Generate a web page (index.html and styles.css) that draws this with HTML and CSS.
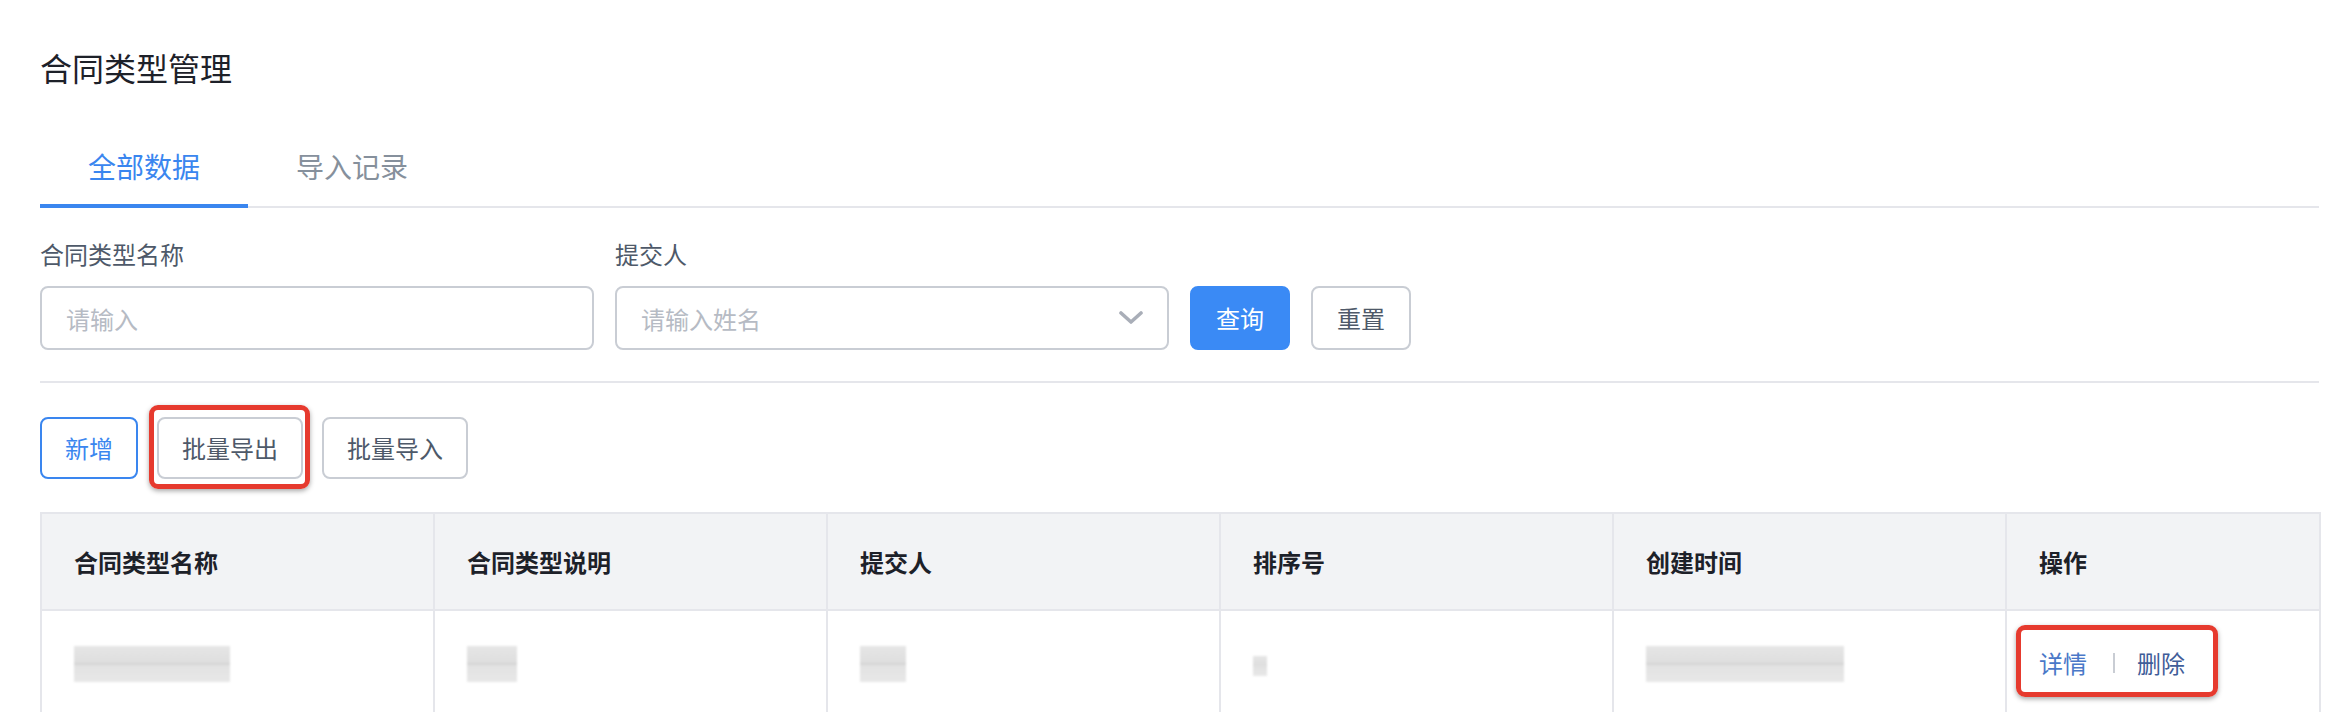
FILE: index.html
```html
<!DOCTYPE html>
<html lang="zh-CN">
<head>
<meta charset="utf-8">
<title>合同类型管理</title>
<link rel="stylesheet" href="styles.css">
</head>
<body>
<div class="page">
  <h1 class="title">合同类型管理</h1>

  <div class="tabs">
    <div class="tab active">全部数据</div>
    <div class="tab">导入记录</div>
  </div>

  <div class="filters">
    <div class="field">
      <div class="label">合同类型名称</div>
      <div class="input"><span class="placeholder">请输入</span></div>
    </div>
    <div class="field">
      <div class="label">提交人</div>
      <div class="input select">
        <span class="placeholder">请输入姓名</span>
        <svg class="chevron" width="24" height="14" viewBox="0 0 24 14"><path d="M2 2 L12 11 L22 2" fill="none" stroke="#a9aeb8" stroke-width="3.6" stroke-linecap="round" stroke-linejoin="round"/></svg>
      </div>
    </div>
    <div class="filter-actions">
      <button class="btn primary">查询</button>
      <button class="btn">重置</button>
    </div>
  </div>

  <div class="divider"></div>

  <div class="toolbar">
    <button class="btn outline-blue">新增</button>
    <button class="btn marked">批量导出<span class="mark mark-btn"></span></button>
    <button class="btn">批量导入</button>
  </div>

  <table class="grid">
    <colgroup>
      <col class="c-std"><col class="c-std"><col class="c-std"><col class="c-std"><col class="c-std"><col class="c-op">
    </colgroup>
    <thead>
      <tr>
        <th>合同类型名称</th>
        <th>合同类型说明</th>
        <th>提交人</th>
        <th>排序号</th>
        <th>创建时间</th>
        <th>操作</th>
      </tr>
    </thead>
    <tbody>
      <tr>
        <td><span class="blur" style="width:156px"></span></td>
        <td><span class="blur" style="width:50px"></span></td>
        <td><span class="blur" style="width:46px"></span></td>
        <td><span class="blur small" style="width:14px"></span></td>
        <td><span class="blur" style="width:198px"></span></td>
        <td>
          <span class="ops">
            <a class="link detail">详情</a><span class="sep"></span><a class="link del">删除</a>
            <span class="mark mark-ops"></span>
          </span>
        </td>
      </tr>
    </tbody>
  </table>
</div>
</body>
</html>
```

FILE: styles.css
```css
* { box-sizing: border-box; }
html, body { margin: 0; padding: 0; background: #fff; }
body {
  font-family: "PingFang SC", "Noto Sans CJK SC", "Noto Sans", sans-serif;
  color: #1d2129;
}
.page {
  padding: 45px 27px 0 40px;
}
.title {
  margin: 0;
  font-size: 32px;
  line-height: 44px;
  font-weight: 400;
  color: #1d2129;
}
.tabs {
  display: flex;
  margin-top: 57px;
  box-shadow: inset 0 -2px 0 #e5e6eb;
}
.tab {
  padding: 0 48px 18px;
  font-size: 28px;
  line-height: 40px;
  color: #86909c;
  border-bottom: 4px solid transparent;
}
.tab.active {
  color: #3a86ef;
  border-bottom-color: #3a86ef;
}
.filters {
  display: flex;
  align-items: flex-end;
  gap: 21px;
  margin-top: 29px;
}
.field {
  width: 554px;
}
.label {
  font-size: 24px;
  line-height: 34px;
  color: #4e5969;
  margin-bottom: 15px;
}
.input {
  height: 64px;
  border: 2px solid #c9cdd4;
  border-radius: 8px;
  padding: 0 24px;
  display: flex;
  align-items: center;
  justify-content: space-between;
}
.placeholder {
  font-size: 24px;
  color: #b6bbc4;
}
.chevron { display: block; margin-right: 0; }
.filter-actions {
  display: flex;
  gap: 21px;
}
.btn {
  height: 64px;
  padding: 0 23px;
  border: 2px solid #c9cdd4;
  border-radius: 8px;
  background: #fff;
  font-family: inherit;
  font-size: 24px;
  color: #4e5969;
  line-height: 1;
  position: relative;
}
.filter-actions .btn { padding: 0 24px; }
.btn.primary {
  background: #3a8af5;
  border-color: #3a8af5;
  color: #fff;
}
.btn.outline-blue {
  border-color: #3a86ef;
  color: #3a86ef;
}
.divider {
  height: 2px;
  background: #e5e6eb;
  margin-top: 31px;
}
.toolbar {
  display: flex;
  gap: 19px;
  margin-top: 34px;
}
.toolbar .btn { height: 62px; }
.mark {
  position: absolute;
  border: 5px solid #e63a2e;
  border-radius: 9px;
  box-shadow: 0 2px 5px rgba(0, 0, 0, 0.35);
  pointer-events: none;
}
.mark-btn {
  top: -14px;
  left: -10px;
  right: -9px;
  bottom: -12px;
}
.grid {
  margin-top: 33px;
  width: 2279px;
  border-collapse: collapse;
  table-layout: fixed;
}
.c-std { width: 393px; }
.c-op { width: 314px; }
.grid th, .grid td {
  border: 2px solid #e5e6eb;
  padding: 0 32px;
  text-align: left;
}
.grid th {
  background: #f2f3f5;
  height: 97px;
  font-size: 24px;
  font-weight: 700;
  color: #1d2129;
}
.grid td {
  height: 104px;
  font-size: 24px;
  vertical-align: middle;
}
.blur {
  display: inline-block;
  height: 36px;
  background: linear-gradient(180deg, #e6e6e6 0%, #dedede 48%, #bdbdbd 50%, #e2e2e2 52%, #e8e8e8 100%);
  filter: blur(1px);
  vertical-align: middle;
}
.blur.small { height: 20px; }
.ops {
  position: relative;
  display: inline-flex;
  align-items: center;
  line-height: 34px;
}
.link { font-size: 24px; cursor: pointer; }
.link.detail { color: #4a78c8; }
.link.del { color: #3f5d99; }
.sep {
  width: 2px;
  height: 20px;
  background: #c9cdd4;
  margin: 0 22px 0 26px;
}
.mark-ops {
  top: -21px;
  left: -23px;
  right: -33px;
  bottom: -17px;
}
```
